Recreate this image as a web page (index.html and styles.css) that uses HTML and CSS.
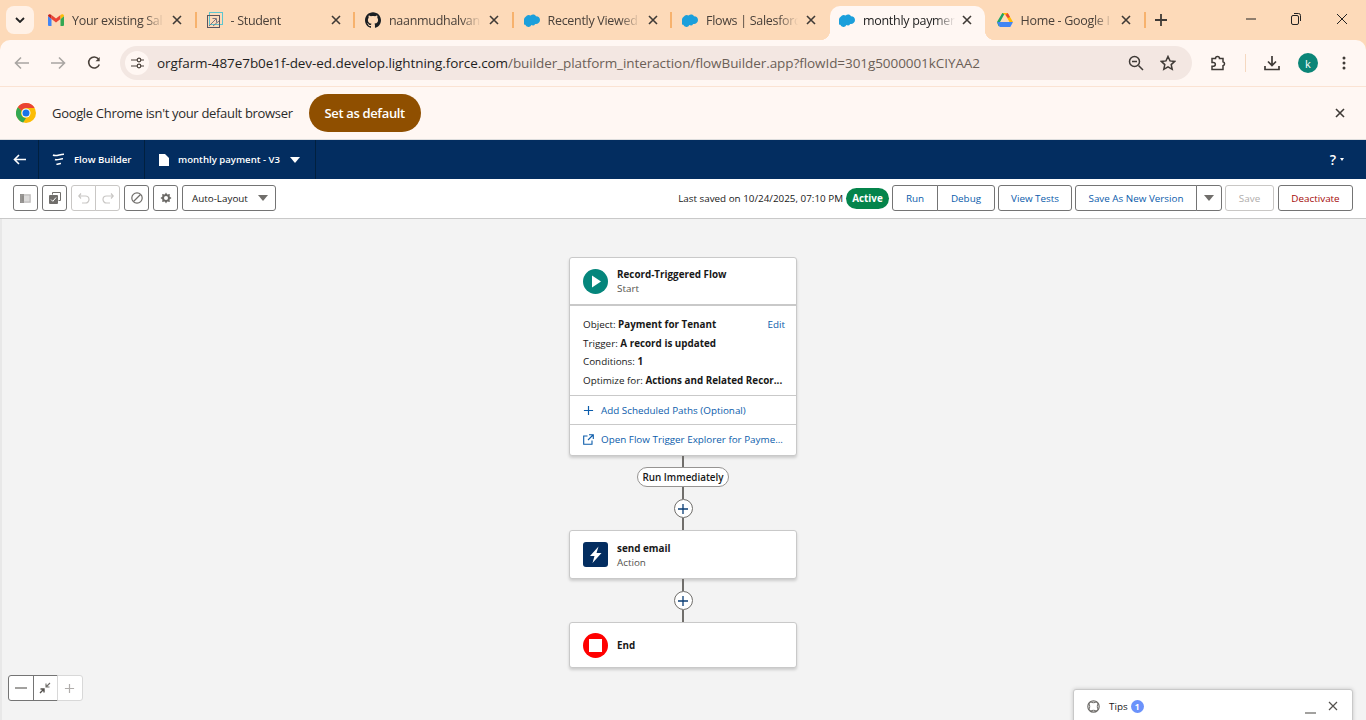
FILE: index.html
```html
<!DOCTYPE html>
<html lang="en">
<head>
	<meta charset="UTF-8">
	<title>monthly payment - V3</title>
	<link rel="stylesheet" href="styles.css">
</head>
<body>
	<svg class="defs" width="0" height="0">
		<symbol id="sf" viewBox="0 0 24 18"><path fill="#1b9fdb" d="M10 2.2A5 5 0 0 1 13.700.6c1.900 0 3.500 1 4.300 2.600A6 6 0 0 1 24 9a6 6 0 0 1-7.200 5.900 4.300 4.300 0 0 1-5.700 1.700 5 5 0 0 1-9.200-.3A4.500 4.500 0 0 1 0 8.600a5 5 0 0 1 2.500-4.400A5.700 5.700 0 0 1 10 2.200z"/></symbol>
		<symbol id="x" viewBox="0 0 12 12"><path d="M2 2l8 8M10 2l-8 8" stroke="#3f3a36" stroke-width="1.600" fill="none"/></symbol>
		<symbol id="plus" viewBox="0 0 12 12"><path d="M6 1v10M1 6h10" stroke="currentColor" stroke-width="1.300" fill="none"/></symbol>
	</svg>

	<div class="tabbar">
		<div class="tab_menu"><svg width="10" height="6" viewBox="0 0 10 6"><path d="M1 1l4 4 4-4" stroke="#222" stroke-width="1.800" fill="none"/></svg></div>
		<div class="tab">
			<svg class="favicon" viewBox="0 0 16 12"><path fill="#4285f4" d="M0 2v9a1 1 0 0 0 1 1h2.500V5z"/><path fill="#34a853" d="M12.500 5v7H15a1 1 0 0 0 1-1V2z"/><path fill="#ea4335" d="M3.500 5V1L8 4.500 12.500 1v4L8 8.500z"/><path fill="#c5221f" d="M0 2c0-1.600 2-2.300 3.500-1v4z"/><path fill="#fbbc04" d="M16 2c0-1.600-2-2.300-3.500-1v4z"/></svg>
			<span class="tab_title">Your existing Sal</span>
			<svg class="tab_close"><use href="#x"/></svg>
		</div>
		<div class="tab">
			<svg class="favicon" viewBox="0 0 16 16"><rect x="2.500" y=".5" width="13" height="12" fill="none" stroke="#5cc6d0"/><rect x=".5" y="3.500" width="12" height="12" fill="none" stroke="#5b5560"/><path d="M2 14l7-7M5.500 6.500H9.500V10.500M6 14l6-5" stroke="#7a7480" fill="none"/></svg>
			<span class="tab_title">- Student</span>
			<svg class="tab_close"><use href="#x"/></svg>
		</div>
		<div class="tab">
			<svg class="favicon" viewBox="0 0 24 24"><path fill="#1b1f23" d="M12 .297c-6.630 0-12 5.373-12 12 0 5.303 3.438 9.800 8.205 11.385.6.113.82-.258.82-.577 0-.285-.01-1.040-.015-2.040-3.338.724-4.042-1.610-4.042-1.610C4.422 18.070 3.633 17.700 3.633 17.700c-1.087-.744.084-.729.084-.729 1.205.084 1.838 1.236 1.838 1.236 1.070 1.835 2.809 1.305 3.495.998.108-.776.417-1.305.76-1.605-2.665-.3-5.466-1.332-5.466-5.930 0-1.310.465-2.380 1.235-3.220-.135-.303-.54-1.523.105-3.176 0 0 1.005-.322 3.300 1.230.96-.267 1.980-.399 3-.405 1.020.006 2.040.138 3 .405 2.280-1.552 3.285-1.230 3.285-1.230.645 1.653.24 2.873.12 3.176.765.84 1.230 1.910 1.230 3.220 0 4.610-2.805 5.625-5.475 5.920.42.36.81 1.096.81 2.220 0 1.606-.015 2.896-.015 3.286 0 .315.21.69.825.57C20.565 22.092 24 17.592 24 12.297c0-6.627-5.373-12-12-12"/></svg>
			<span class="tab_title">naanmudhalvan</span>
			<svg class="tab_close"><use href="#x"/></svg>
		</div>
		<div class="tab">
			<svg class="favicon"><use href="#sf"/></svg>
			<span class="tab_title">Recently Viewed</span>
			<svg class="tab_close"><use href="#x"/></svg>
		</div>
		<div class="tab tab_plain">
			<svg class="favicon"><use href="#sf"/></svg>
			<span class="tab_title">Flows | Salesforc</span>
			<svg class="tab_close"><use href="#x"/></svg>
		</div>
		<div class="tab tab_active">
			<svg class="favicon"><use href="#sf"/></svg>
			<span class="tab_title">monthly paymen</span>
			<svg class="tab_close"><use href="#x"/></svg>
		</div>
		<div class="tab tab_last">
			<svg class="favicon" viewBox="0 0 16 14"><path fill="#1ea362" d="M5.300 0H8L3 9 1.500 13.500 0 9z"/><path fill="#ffba00" d="M5.300 0h5.400L16 9h-3.500L8.500 2z"/><path fill="#ea4335" d="M10.700 0L13 4l-2 1-2.500-3z"/><path fill="#4285f4" d="M0 9h16l-2.700 5H2.700z"/></svg>
			<span class="tab_title">Home - Google I</span>
			<svg class="tab_close"><use href="#x"/></svg>
		</div>
		<svg class="tab_new" width="12" height="12" viewBox="0 0 12 12"><path d="M6 0v12M0 6h12" stroke="#3f3a36" stroke-width="1.800"/></svg>
		<div class="win_btns">
			<svg width="10" height="10" viewBox="0 0 10 10"><path d="M0 5h10" stroke="#222"/></svg>
			<svg width="10" height="12" viewBox="0 0 10 12"><rect x=".5" y="2.500" width="7" height="9" rx="1.500" fill="none" stroke="#222"/><path d="M3 .5h4.500a2 2 0 0 1 2 2V8" fill="none" stroke="#222"/></svg>
			<svg width="12" height="12" viewBox="0 0 12 12"><path d="M1 1l10 10M11 1L1 11" stroke="#222"/></svg>
		</div>
	</div>

	<div class="addrbar">
		<svg class="nav_icon" width="16" height="14" viewBox="0 0 16 14"><path d="M15 7H2M7 1.500L1.500 7 7 12.500" stroke="#a9a5a2" stroke-width="1.600" fill="none"/></svg>
		<svg class="nav_icon" width="16" height="14" viewBox="0 0 16 14"><path d="M1 7h13M9 1.500L14.500 7 9 12.500" stroke="#a9a5a2" stroke-width="1.600" fill="none"/></svg>
		<svg class="nav_icon nav_reload" width="14" height="14" viewBox="0 0 14 14"><path d="M12.300 8.500A5.500 5.500 0 1 1 11.500 3" stroke="#4a413a" stroke-width="1.600" fill="none"/><path d="M12.700 1v4.200H8.500z" fill="#4a413a"/></svg>
		<div class="omnibox">
			<div class="site_info"><svg width="13" height="12" viewBox="0 0 13 12"><path d="M0 3h6M0 9h6M10 9h3M10 3h3" stroke="#4a413a" stroke-width="1.200"/><circle cx="8" cy="3" r="1.800" fill="none" stroke="#4a413a" stroke-width="1.200"/><circle cx="8" cy="9" r="1.800" fill="none" stroke="#4a413a" stroke-width="1.200"/></svg></div>
			<div class="url"><span class="url_host">orgfarm-487e7b0e1f-dev-ed.develop.lightning.force.com</span>/builder_platform_interaction/flowBuilder.app?flowId=301g5000001kCIYAA2</div>
			<svg class="omni_zoom" width="16" height="16" viewBox="0 0 16 16"><circle cx="6.500" cy="6.500" r="5" fill="none" stroke="#3f3a36" stroke-width="1.500"/><path d="M10.500 10.500l4.500 4.500M4 6.500h5" stroke="#3f3a36" stroke-width="1.500"/></svg>
			<svg width="16" height="16" viewBox="0 0 16 16"><path d="M8 1.500l2 4.400 4.700.5-3.500 3.200 1 4.700L8 11.900l-4.200 2.400 1-4.700L1.300 6.400 6 5.900z" fill="none" stroke="#3f3a36" stroke-width="1.500"/></svg>
		</div>
		<svg class="ext_icon" width="16" height="16" viewBox="0 0 16 16"><path d="M2 3.500h3.500a2 2 0 0 1 4 0H13v3.300a2 2 0 0 1 0 3.900v3.800H2v-3.300h1.500a1.800 1.800 0 0 0 0-3.700H2z" fill="none" stroke="#3f3a36" stroke-width="1.500"/></svg>
		<span class="addr_sep"></span>
		<svg class="dl_icon" width="16" height="16" viewBox="0 0 16 16"><path d="M8 1v9M4 6.500L8 10.500l4-4M1 11v3.500h14V11" fill="none" stroke="#3f3a36" stroke-width="1.700"/></svg>
		<span class="avatar">k</span>
		<svg class="more_icon" width="4" height="14" viewBox="0 0 4 14"><circle cx="2" cy="2" r="1.500" fill="#3f3a36"/><circle cx="2" cy="7" r="1.500" fill="#3f3a36"/><circle cx="2" cy="12" r="1.500" fill="#3f3a36"/></svg>
	</div>

	<div class="infobar">
		<svg class="chrome_logo" width="20" height="20" viewBox="0 0 20 20">
			<circle cx="10" cy="10" r="10" fill="#fbbc04"/>
			<path d="M10 0a10 10 0 0 1 8.660 5H10a5 5 0 0 0-4.500 2.800L1.800 4.200A10 10 0 0 1 10 0z" fill="#ea4335"/>
			<path d="M1.800 4.200L5.500 7.800A5 5 0 0 0 10 15l-2.800 4.600A10 10 0 0 1 1.800 4.200z" fill="#34a853"/>
			<circle cx="10" cy="10" r="4.500" fill="#fff"/><circle cx="10" cy="10" r="3.500" fill="#1a73e8"/>
		</svg>
		<span class="info_text">Google Chrome isn't your default browser</span>
		<span class="info_btn">Set as default</span>
		<svg class="info_close" width="12" height="12"><use href="#x"/></svg>
	</div>

	<div class="sf_header">
		<div class="hd_cell hd_back"><svg width="13" height="11" viewBox="0 0 13 11"><path d="M13 5.500H1.500M6 1L1.500 5.500 6 10" stroke="#fff" stroke-width="1.600" fill="none"/></svg></div>
		<div class="hd_cell hd_app">
			<svg width="13" height="13" viewBox="0 0 13 13"><path d="M1 2c3 1.800 7-1 11-.8M3 6.500c2.500 1.300 5-1 8-.7M4.500 11c2 .8 3-.8 4.500-.6" stroke="#fff" stroke-width="1.500" fill="none"/></svg>
			<span>Flow Builder</span>
		</div>
		<div class="hd_cell hd_flow">
			<svg width="10" height="12" viewBox="0 0 10 12"><path d="M0 0h6l4 4v8H0z" fill="#fff"/></svg>
			<span>monthly payment - V3</span>
			<i class="caret caret_white"></i>
		</div>
		<div class="hd_help">?<i class="caret_small"></i></div>
	</div>

	<div class="sf_toolbar">
		<div class="btn icon_btn"><svg width="11" height="9" viewBox="0 0 11 9"><rect width="11" height="9" fill="#dcdbda"/><rect width="4" height="9" fill="#8f8d8a"/><rect x="1" y="1" width="9" height="7" fill="none" stroke="#a8a6a4" stroke-width=".6"/></svg></div>
		<div class="btn icon_btn"><svg width="12" height="12" viewBox="0 0 12 12"><path d="M3.500 2.500V.5h8v8h-2" fill="none" stroke="#706e6b"/><rect x="0" y="3" width="9" height="9" rx="1" fill="#706e6b"/><path d="M2 7.500l1.800 1.800L7 5.500" stroke="#fff" fill="none"/></svg></div>
		<div class="btn_group btn_group_off">
			<div class="btn icon_btn"><svg width="12" height="12" viewBox="0 0 12 12"><path d="M3 1.500L.8 4 3 6.500M1 4h6.500a3.500 3.500 0 0 1 0 7H4" stroke="#c9c7c5" stroke-width="1.200" fill="none"/></svg></div>
			<div class="btn icon_btn"><svg width="12" height="12" viewBox="0 0 12 12"><path d="M9 1.500L11.200 4 9 6.500M11 4H4.500a3.500 3.500 0 0 0 0 7H8" stroke="#c9c7c5" stroke-width="1.200" fill="none"/></svg></div>
		</div>
		<div class="btn icon_btn"><svg width="12" height="12" viewBox="0 0 12 12"><circle cx="6" cy="6" r="5.200" fill="none" stroke="#706e6b" stroke-width="1.200"/><path d="M2.500 9.500l7-7" stroke="#706e6b" stroke-width="1.200"/></svg></div>
		<div class="btn icon_btn"><svg width="12" height="12" viewBox="0 0 12 12"><path d="M6 .5l1.200 2 2.600-.6-.2 2.500L11.500 6l-1.900 1.600.2 2.500-2.600-.6L6 11.500l-1.200-2-2.600.6.2-2.500L.5 6l1.900-1.600-.2-2.500 2.600.6z" fill="#6b6966"/><circle cx="6" cy="6" r="2" fill="#fff"/></svg></div>
		<div class="btn select_btn"><span>Auto-Layout</span><i class="caret caret_grey"></i></div>
		<div class="tb_right">
			<span class="saved">Last saved on 10/24/2025, 07:10 PM</span>
			<span class="badge_active">Active</span>
			<div class="btn_group">
				<div class="btn text_btn btn_run">Run</div>
				<div class="btn text_btn btn_debug">Debug</div>
			</div>
			<div class="btn text_btn btn_tests">View Tests</div>
			<div class="btn_group">
				<div class="btn text_btn btn_saveas">Save As New Version</div>
				<div class="btn text_btn btn_more"><i class="caret caret_grey"></i></div>
			</div>
			<div class="btn text_btn btn_save">Save</div>
			<div class="btn text_btn btn_deact">Deactivate</div>
		</div>
	</div>

	<div class="canvas">
		<div class="card">
			<div class="card_head card_head_start">
				<svg class="node_icon" viewBox="0 0 25 25"><circle cx="12.500" cy="12.500" r="12.500" fill="#05867c"/><path d="M9 6.500l9 6-9 6z" fill="#fff"/></svg>
				<div>
					<div class="node_title">Record-Triggered Flow</div>
					<div class="node_sub">Start</div>
				</div>
			</div>
			<div class="card_body">
				<a class="edit_link">Edit</a>
				<div class="row">Object: <b>Payment for Tenant</b></div>
				<div class="row">Trigger: <b>A record is updated</b></div>
				<div class="row">Conditions: <b>1</b></div>
				<div class="row">Optimize for: <b>Actions and Related Recor...</b></div>
			</div>
			<div class="card_link">
				<svg class="link_icon" width="11" height="11"><use href="#plus"/></svg>
				<span>Add Scheduled Paths (Optional)</span>
			</div>
			<div class="card_link card_link_last">
				<svg class="link_icon" width="11" height="11" viewBox="0 0 11 11"><path d="M4.500 2H.7v8.300H9V6.500M6 .7h4.300V5M10 1L5 6" fill="none" stroke="currentColor" stroke-width="1.100"/></svg>
				<span>Open Flow Trigger Explorer for Payme...</span>
			</div>
		</div>

		<div class="line line_a"></div>
		<div class="pill">Run Immediately</div>
		<div class="line line_b"></div>
		<div class="add_node"><svg width="12" height="12"><use href="#plus"/></svg></div>
		<div class="line line_c"></div>

		<div class="card">
			<div class="card_head">
				<svg class="node_icon" viewBox="0 0 25 25"><rect width="25" height="25" rx="3" fill="#032d60"/><path d="M15.500 4.500L7 14h4.500l-2 7L18.500 11h-5z" fill="#fff"/></svg>
				<div>
					<div class="node_title">send email</div>
					<div class="node_sub">Action</div>
				</div>
			</div>
		</div>

		<div class="line line_d"></div>
		<div class="add_node"><svg width="12" height="12"><use href="#plus"/></svg></div>
		<div class="line line_e"></div>

		<div class="card">
			<div class="card_head card_head_end">
				<svg class="node_icon" viewBox="0 0 25 25"><circle cx="12.500" cy="12.500" r="12.500" fill="#f00"/><rect x="6" y="6" width="13" height="13" fill="#fff"/></svg>
				<div class="node_title">End</div>
			</div>
		</div>

		<div class="zoom_ctl">
			<div class="btn zoom_btn"><svg width="12" height="2" viewBox="0 0 12 2"><path d="M0 1h12" stroke="#706e6b" stroke-width="1.300"/></svg></div>
			<div class="btn zoom_btn"><svg width="12" height="12" viewBox="0 0 12 12"><path d="M7 5l4-4M7 1.500V5h3.500" stroke="#706e6b" stroke-width="1.100" fill="none"/><path d="M5 7l-4 4M5 10.500V7H1.500" stroke="#54514e" stroke-width="1.400" fill="none"/></svg></div>
			<div class="btn zoom_btn zoom_off"><svg width="11" height="11"><use href="#plus"/></svg></div>
		</div>

		<div class="tips">
			<svg width="13" height="13" viewBox="0 0 13 13"><circle cx="6.500" cy="6.500" r="5.700" fill="none" stroke="#706e6b" stroke-width="1.200"/><path d="M3 1.800c2 1.200 5 1.200 7 0M3 11.200c2-1.200 5-1.200 7 0M1.800 3c1.200 2 1.200 5 0 7M11.200 3c-1.200 2-1.200 5 0 7" fill="none" stroke="#706e6b"/></svg>
			<span class="tips_label">Tips</span>
			<span class="tips_count">1</span>
			<svg class="tips_min" width="11" height="11" viewBox="0 0 11 11"><path d="M0 10h11" stroke="#706e6b" stroke-width="1.300"/></svg>
			<svg class="tips_x" width="10" height="10" viewBox="0 0 10 10"><path d="M1 1l8 8M9 1L1 9" stroke="#54514e" stroke-width="1.200"/></svg>
		</div>
	</div>
</body>
</html>
```

FILE: styles.css
```css
*{
	box-sizing:border-box;
	margin:0;
	padding:0;
}

body{
	width:1366px;
	height:720px;
	overflow:hidden;
	display:flex;
	flex-direction:column;
	background-color:#f3f3f3;
	font-family:"Open Sans","Noto Sans",sans-serif;
}

.defs{
	position:absolute;
}

/* browser tabs - runs 10px under the address bar so its round corners show peach */
.tabbar{
	height:50px;
	margin-bottom:-10px;
	flex:none;
	display:flex;
	align-items:flex-start;
	background-color:#fddab9;
	padding:6px 0 0 6px;
}

.tab_menu{
	width:28px;
	height:28px;
	margin-right:3px;
	border-radius:8px;
	background-color:#fff1e6;
	display:flex;
	align-items:center;
	justify-content:center;
}

.tab{
	width:158.500px;
	height:34px;
	display:flex;
	align-items:center;
	padding:0 0 6px 11px;
	position:relative;
	flex:none;
}

.tab::after{
	content:"";
	position:absolute;
	right:-1px;
	top:6px;
	height:16px;
	width:2px;
	background-color:#f7b26d;
}

.tab_plain::after{
	display:none;
}

.tab_active{
	background-color:#fff7f3;
	border-radius:10px 10px 0 0;
	width:155px;
	padding-left:9.500px;
	z-index:1;
}

.tab_active::before,
.tab_active::after{
	content:"";
	display:block;
	position:absolute;
	top:auto;
	bottom:0;
	width:10px;
	height:10px;
	background-color:transparent;
}

.tab_active::before{
	left:-10px;
	background:radial-gradient(circle at 0 0,transparent 10px,#fff7f3 10.500px);
}

.tab_active::after{
	right:-10px;
	background:radial-gradient(circle at 100% 0,transparent 10px,#fff7f3 10.500px);
}

.tab_last{
	width:160px;
	padding-left:12px;
}

.favicon{
	width:16px;
	height:16px;
	flex:none;
	margin-right:8px;
}

.tab_title{
	width:95px;
	overflow:hidden;
	white-space:nowrap;
	flex:none;
	font-size:12.500px;
	letter-spacing:-.3px;
	color:#4a413a;
	-webkit-mask-image:linear-gradient(to right,#000 76%,transparent 97%);
}

.tab_active .tab_title{
	color:#222;
}

.tab_close{
	width:12px;
	height:12px;
	margin-left:4px;
	flex:none;
}

.tab_active .tab_close{
	margin-left:3px;
}

.tab_new{
	margin:8px 0 0 10.500px;
}

.win_btns{
	margin-left:auto;
	display:flex;
	align-items:center;
	gap:35px;
	padding:3px 18px 0 0;
	height:22px;
}

/* address bar */
.addrbar{
	height:47px;
	flex:none;
	display:flex;
	align-items:center;
	position:relative;
	background-color:#fff7f3;
	border-bottom:1px solid #fbe3d3;
	border-radius:10px 10px 0 0;
	padding-left:14px;
}

.nav_icon{
	margin-right:20px;
}

.nav_reload{
	margin-left:1px;
}

.omnibox{
	width:1072px;
	height:34px;
	margin-left:-1px;
	border-radius:17px;
	background-color:#f3e7e2;
	display:flex;
	align-items:center;
	padding:0 16px 0 5px;
}

.site_info{
	width:24px;
	height:24px;
	border-radius:50%;
	background-color:#fff7f3;
	display:flex;
	align-items:center;
	justify-content:center;
	margin-right:8px;
}

.url{
	font-size:13.500px;
	letter-spacing:-.07px;
	color:#6b5f57;
	white-space:nowrap;
	flex:1;
}

.url_host{
	color:#1f1f1f;
}

.omni_zoom{
	margin-right:16px;
}

.ext_icon{
	margin-left:18px;
}

.addr_sep{
	width:1px;
	height:18px;
	background-color:#f5d8c0;
	margin:0 18px 0 19px;
}

.avatar{
	width:20px;
	height:20px;
	margin-left:18px;
	border-radius:50%;
	background-color:#0b8577;
	color:#fff;
	font-size:11px;
	display:flex;
	align-items:center;
	justify-content:center;
}

.more_icon{
	margin-left:24px;
}

/* default browser bar */
.infobar{
	height:53px;
	flex:none;
	display:flex;
	align-items:center;
	background-color:#fff7f3;
	border-bottom:1px solid #ddd;
	padding:0 20px 0 16px;
}

.info_text{
	font-size:13px;
	letter-spacing:-.32px;
	color:#2b2b2b;
	margin-left:16px;
}

.info_btn{
	margin-left:16px;
	width:112px;
	height:38px;
	border-radius:19px;
	background-color:#8f4f00;
	color:#fff;
	font-size:13px;
	font-weight:600;
	letter-spacing:-.35px;
	display:flex;
	align-items:center;
	justify-content:center;
}

.info_close{
	margin-left:auto;
}

/* salesforce header */
.sf_header{
	height:39px;
	flex:none;
	display:flex;
	align-items:center;
	background-color:#032d60;
	color:#fff;
	font-size:9.600px;
	font-weight:600;
}

.hd_cell{
	height:39px;
	display:flex;
	align-items:center;
	border-right:1px solid #01203f;
}

.hd_back{
	width:39px;
	padding-left:13px;
}

.hd_app{
	width:106px;
	padding-left:13px;
	gap:9px;
}

.hd_flow{
	width:171px;
	padding-left:14px;
	gap:9px;
}

.caret{
	display:inline-block;
	width:0;
	height:0;
	border-left:5px solid transparent;
	border-right:5px solid transparent;
	border-top:6px solid #fff;
}

.caret_white{
	margin-left:1px;
}

.caret_grey{
	border-top-color:#706e6b;
}

.hd_help{
	margin-left:auto;
	padding-right:22px;
	font-size:14px;
	display:flex;
	align-items:center;
	gap:4px;
}

.caret_small{
	width:0;
	height:0;
	border-left:2.500px solid transparent;
	border-right:2.500px solid transparent;
	border-top:3px solid #fff;
}

/* builder toolbar */
.sf_toolbar{
	height:40px;
	flex:none;
	display:flex;
	align-items:center;
	gap:4px;
	background-color:#fff;
	border-bottom:1px solid #c9c9c9;
	padding:0 13px 1px 13px;
	font-size:9.850px;
}

.btn{
	height:26px;
	border:1px solid #747474;
	border-radius:3px;
	background-color:#fff;
	display:flex;
	align-items:center;
	justify-content:center;
}

.icon_btn{
	width:25px;
}

.btn_group{
	display:flex;
}

.btn_group .btn:first-child{
	border-radius:3px 0 0 3px;
}

.btn_group .btn:last-child{
	border-radius:0 3px 3px 0;
	margin-left:-1px;
}

.btn_group_off .btn{
	border-color:#c9c7c5;
}

.select_btn{
	width:94px;
	justify-content:space-between;
	padding:0 7px 0 9px;
	color:#181818;
}

.tb_right{
	margin-left:auto;
	display:flex;
	align-items:center;
	gap:3px;
}

.saved{
	color:#181818;
	white-space:nowrap;
}

.badge_active{
	width:43px;
	height:21px;
	border-radius:11px;
	background-color:#04844b;
	color:#fff;
	font-weight:700;
	display:flex;
	align-items:center;
	justify-content:center;
}

.text_btn{
	color:#0b5cab;
}

.btn_run{
	width:46px;
}

.btn_debug{
	width:58px;
}

.btn_tests{
	width:74px;
}

.btn_saveas{
	width:122px;
}

.btn_more{
	width:26px;
}

.btn_save{
	width:49px;
	color:#b0adab;
	border-color:#c9c7c5;
}

.btn_deact{
	width:75px;
	margin-left:1px;
	color:#a60a0a;
}

/* canvas */
.canvas{
	flex:1;
	position:relative;
	display:flex;
	flex-direction:column;
	align-items:center;
	padding-top:38px;
	box-shadow:inset 2px 0 0 #e8e8e8;
	overflow:hidden;
	font-size:9.850px;
	color:#181818;
}

.card{
	width:228px;
	background-color:#fff;
	border:1px solid #c9c9c9;
	border-radius:3px;
	box-shadow:0 2px 3px rgba(0,0,0,.16);
	flex:none;
}

.card_head{
	height:47px;
	display:flex;
	align-items:center;
	gap:9px;
	padding-left:13px;
}

.card_head_start{
	border-bottom:2px solid #c9c9c9;
	height:48px;
}

.card_head_end{
	height:44px;
}

.node_icon{
	width:25px;
	height:25px;
	flex:none;
}

.node_title{
	font-weight:700;
	line-height:14px;
}

.node_sub{
	color:#54514e;
	line-height:14px;
}

.card_body{
	position:relative;
	height:89px;
	padding:9px 13px 0 13px;
}

.row{
	height:18.700px;
	line-height:18px;
	white-space:nowrap;
}

.edit_link{
	position:absolute;
	right:11px;
	top:9px;
	line-height:18px;
	color:#0b5cab;
}

.card_link{
	height:29px;
	border-top:1px solid #c9c9c9;
	display:flex;
	align-items:center;
	gap:7px;
	padding-left:13px;
	color:#0b5cab;
	white-space:nowrap;
}

.card_link_last{
	height:31px;
	padding-bottom:2px;
}

.link_icon{
	flex:none;
}

.line{
	width:2px;
	background-color:#706e6b;
	flex:none;
}

.line_a{
	height:11px;
}

.line_b{
	height:12px;
}

.line_c{
	height:12px;
}

.line_d{
	height:12px;
}

.line_e{
	height:12px;
}

.pill{
	height:20px;
	width:92px;
	border:1px solid #969492;
	border-radius:10px;
	background-color:#fff;
	font-weight:600;
	display:flex;
	align-items:center;
	justify-content:center;
	white-space:nowrap;
	flex:none;
}

.add_node{
	width:19px;
	height:19px;
	border:1px solid #706e6b;
	border-radius:50%;
	background-color:#fff;
	color:#0b3e75;
	display:flex;
	align-items:center;
	justify-content:center;
	flex:none;
}

.zoom_ctl{
	position:absolute;
	left:8px;
	top:456px;
	display:flex;
}

.zoom_btn{
	width:25.500px;
	margin-right:-1px;
	border-radius:0;
}

.zoom_btn:first-child{
	border-radius:3px 0 0 3px;
}

.zoom_off{
	border-color:#d8d8d8;
	border-radius:0 3px 3px 0;
	color:#b0adab;
}

.tips{
	position:absolute;
	left:1073px;
	top:470px;
	width:280px;
	height:40px;
	background-color:#fff;
	border:1px solid #c9c9c9;
	border-radius:3px 3px 0 0;
	box-shadow:0 0 4px rgba(0,0,0,.18);
	display:flex;
	align-items:flex-start;
	padding:10px 0 0 13px;
}

.tips_label{
	margin-left:9px;
	line-height:13px;
}

.tips_count{
	width:13px;
	height:13px;
	margin-left:3px;
	border-radius:50%;
	background-color:#6b92fb;
	color:#fff;
	font-size:8.500px;
	font-weight:700;
	text-align:center;
	line-height:13px;
}

.tips_min{
	margin-left:auto;
	margin-top:3px;
}

.tips_x{
	margin:1px 14px 0 12px;
}
```
